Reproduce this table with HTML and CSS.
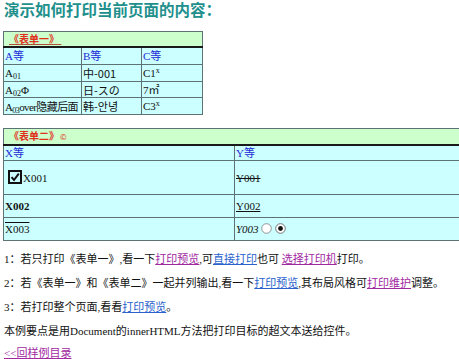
FILE: index.html
```html
<!DOCTYPE html>
<html lang="zh">
<head>
<meta charset="utf-8">
<title>打印演示</title>
<link rel="stylesheet" href="styles.css">
</head>
<body>
<h1 class="title">演示如何打印当前页面的内容：</h1>

<table class="grid grid-one">
  <colgroup><col class="c1"><col class="c2"><col class="c3"></colgroup>
  <tr class="head"><td colspan="3"><u class="cap">《表单一》&nbsp;</u></td></tr>
  <tr class="lbl r1"><td>A等</td><td>B等</td><td>C等</td></tr>
  <tr class="r2"><td>A<sub>01</sub></td><td class="sans">中-001</td><td>C1<sup>x</sup></td></tr>
  <tr class="r3"><td>A<sub>02</sub>Φ</td><td class="sans">日-スの</td><td>7<span class="sans">㎡</span></td></tr>
  <tr class="r4"><td class="tight">A<sub>03</sub>over<span class="sans">隐藏后面</span></td><td class="sans">韩-안녕</td><td>C3<sup>x</sup></td></tr>
</table>

<div class="clip">
<table class="grid grid-two">
  <colgroup><col class="d1"><col class="d2"></colgroup>
  <tr class="head"><td colspan="2"><span class="cap2">《表单二》<small>©</small></span></td></tr>
  <tr class="lbl s1"><td>X等</td><td>Y等</td></tr>
  <tr class="s2">
    <td><svg class="chk" width="14" height="14" viewBox="0 0 14 14"><rect x="1" y="1" width="12" height="12" fill="none" stroke="#111" stroke-width="2"/><path d="M3.5 7.2 L6 10 L10.8 3.6" fill="none" stroke="#111" stroke-width="2"/></svg>X001</td>
    <td><s>Y001</s></td>
  </tr>
  <tr class="s3"><td><b>X002</b></td><td><u>Y002</u></td></tr>
  <tr class="s4">
    <td><span class="over">X003</span></td>
    <td><i>Y003</i> <svg class="radio" width="11" height="11" viewBox="0 0 11 11"><circle cx="5.5" cy="5.5" r="4.8" fill="#fff" stroke="#888" stroke-width="0.9"/></svg> <svg class="radio" width="11" height="11" viewBox="0 0 11 11"><circle cx="5.5" cy="5.5" r="4.8" fill="#fff" stroke="#666" stroke-width="0.9"/><circle cx="5.5" cy="5.5" r="2.4" fill="#111"/></svg></td>
  </tr>
</table>
</div>

<p class="note">1：若只打印《表单一》,看一下<a class="v" href="#">打印预览</a>,可<a class="n" href="#">直接打印</a>也可 <a class="v" href="#">选择打印机</a>打印。</p>
<p class="note">2：若《表单一》和《表单二》一起并列输出,看一下<a class="n" href="#">打印预览</a>,其布局风格可<a class="v" href="#">打印维护</a>调整。</p>
<p class="note">3：若打印整个页面,看看<a class="n" href="#">打印预览</a>。</p>
<p class="note">本例要点是用Document的innerHTML方法把打印目标的超文本送给控件。</p>
<p class="note last"><a class="v" href="#">&lt;&lt;回样例目录</a></p>
</body>
</html>
```

FILE: styles.css
```css
html { overflow: hidden; }
body {
  margin: 0;
  padding: 2px 0 0 3px;
  font-family: "Liberation Serif", "Noto Sans CJK SC", "Noto Sans CJK KR", serif;
  font-size: 11px;
  color: #111;
  background: #fff;
}
.title {
  margin: 0 0 0 1px;
  font-size: 15.5px;
  line-height: 18px;
  font-weight: bold;
  color: #21908c;
}
.sans { font-family: "Noto Sans CJK SC", "Noto Sans CJK KR", sans-serif; font-size: 11px; }
.grid {
  border-collapse: collapse;
  background: #ccffff;
  border: 1px solid #5d7373;
}
.grid td {
  border: 1px solid #5d7373;
  padding: 0 1px;
  line-height: 14px;
  vertical-align: middle;
  white-space: nowrap;
}
.grid .head td {
  background: #ccffcc;
  border-bottom: 2px solid #1a1a1a;
  height: 12px;
  padding-left: 5px;
}
.grid .lbl td { color: #1f2bd6; }
.grid-one { margin-top: 11px; width: 199px; table-layout: fixed; }
.grid-one .c1 { width: 78px; }
.grid-one .c2 { width: 60px; }
.grid-one .c3 { width: 61px; }
.grid-one .r1 td { height: 16px; }
.grid-one .r2 td { height: 16px; }
.grid-one .r3 td { height: 15px; }
.grid-one .r4 td { height: 16px; }
.grid-one td { overflow: visible; }
.grid-one td.tight { letter-spacing: -0.6px; }
.cap {
  color: #e0301c;
  font-weight: bold;
  font-family: "Noto Sans CJK SC", sans-serif;
  font-size: 10px;
  text-decoration-color: #b0503a;
}
.cap2 {
  color: #e0301c;
  font-weight: bold;
  font-family: "Noto Sans CJK SC", sans-serif;
  font-size: 10px;
}
.cap2 small { font-size: 8px; font-weight: normal; margin-left: 1px; }
sub, sup { font-size: 8px; line-height: 0; }
sub { vertical-align: -2px; }
sup { vertical-align: 4px; }
.clip { margin-top: 13px; }
.grid-two { width: calc(100% + 8px); table-layout: fixed; }
.grid-two .d1 { width: 231px; }
.grid-two .s1 td { height: 13px; }
.grid-two .s2 td { height: 33px; }
.grid-two .s3 td { height: 22px; }
.grid-two .s4 td { height: 22px; }
.chk { vertical-align: -2px; margin: 0 1px 0 3px; }
.radio { vertical-align: -1px; }
.over { text-decoration: overline; }
.note {
  margin: 10px 0 0 1px;
  line-height: 14px;
}
.note:first-of-type { margin-top: 11px; }
.note.last { margin-top: 8px; }
a.v { color: #a1299f; text-decoration: underline; }
a.n { color: #2a62cc; text-decoration: underline; }
```
